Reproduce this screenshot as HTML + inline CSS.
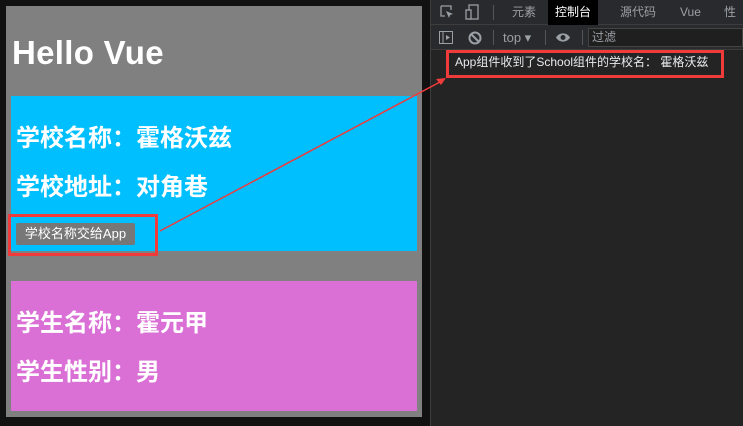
<!DOCTYPE html>
<html><head><meta charset="utf-8"><style>
*{margin:0;padding:0;box-sizing:border-box}
body{width:743px;height:426px;overflow:hidden;background:#111;position:relative;font-family:"Liberation Sans","Noto Sans CJK SC",sans-serif}
.a{position:absolute}
.panel{left:6px;top:6px;width:416px;height:411px;background:#808080}
h1{position:absolute;left:12px;top:34px;font-size:33px;color:#fff;font-weight:bold;line-height:38px;letter-spacing:0.3px}
.blue{left:11px;top:96px;width:406px;height:155px;background:#00bfff}
.pink{left:11px;top:281px;width:406px;height:130px;background:#da70d6}
.t{position:absolute;left:16px;font-size:24px;font-weight:bold;color:#fff;line-height:28px;white-space:nowrap}
.btn{left:16px;top:223px;width:119px;height:22px;background:#777;border-radius:2px;color:#fff;font-size:13px;line-height:22px;text-align:center}
.dev{left:430px;top:0;width:313px;height:426px;background:#242424;border-left:1px solid #3d3d3d}
.bar1{left:431px;top:0;width:312px;height:25px;background:#292a2d;border-bottom:1px solid #3d3d3d}
.bar2{left:431px;top:25px;width:312px;height:25px;background:#292a2d;border-bottom:1px solid #3d3d3d}
.tab{position:absolute;top:0;height:25px;line-height:25px;font-size:12px;color:#9aa0a6}
.redbox{border:3px solid #f03b3b}
</style></head><body>
<div class="a panel"></div>
<h1>Hello Vue</h1>
<div class="a blue"></div>
<div class="t" style="top:125px">学校名称：霍格沃兹</div>
<div class="t" style="top:174px">学校地址：对角巷</div>
<div class="a btn">学校名称交给App</div>
<div class="a redbox" style="left:8px;top:214px;width:150px;height:42px"></div>
<div class="a pink"></div>
<div class="t" style="top:310px">学生名称：霍元甲</div>
<div class="t" style="top:359px">学生性别：男</div>

<div class="a dev"></div>
<div class="a bar1">
 <svg class="a" style="left:9px;top:5px" width="14" height="14" viewBox="0 0 14 14"><path d="M1 1h10v4M1 1v10h4" stroke="#9aa0a6" fill="none" stroke-width="1.3"/><path d="M6 6l7 3-3 1-1 3z" fill="#9aa0a6"/></svg>
 <svg class="a" style="left:34px;top:4px" width="14" height="16" viewBox="0 0 14 16"><rect x="4" y="1" width="9" height="14" stroke="#9aa0a6" fill="none" stroke-width="1.3"/><rect x="1" y="6" width="5" height="9" stroke="#9aa0a6" fill="#292a2d" stroke-width="1.3"/></svg>
 <div class="a" style="left:62px;top:5px;width:1px;height:15px;background:#555"></div>
 <div class="tab" style="left:81px">元素</div>
 <div class="tab" style="left:117px;width:50px;background:#000;color:#fff;text-align:center">控制台</div>
 <div class="tab" style="left:189px">源代码</div>
 <div class="tab" style="left:249px">Vue</div>
 <div class="tab" style="left:293px">性能</div>
</div>
<div class="a bar2">
 <svg class="a" style="left:8px;top:6px" width="14" height="13" viewBox="0 0 14 13"><rect x="0.5" y="0.5" width="13" height="12" stroke="#9aa0a6" fill="none"/><path d="M4 1v11" stroke="#9aa0a6"/><path d="M7 4l4 2.5-4 2.5z" fill="#9aa0a6"/></svg>
 <svg class="a" style="left:37px;top:6px" width="14" height="14" viewBox="0 0 14 14"><circle cx="7" cy="7" r="5.5" stroke="#9aa0a6" fill="none" stroke-width="2"/><path d="M3 3l8 8" stroke="#9aa0a6" stroke-width="2"/></svg>
 <div class="a" style="left:62px;top:5px;width:1px;height:15px;background:#555"></div>
 <div class="tab" style="left:72px;font-size:13px">top ▾</div>
 <div class="a" style="left:114px;top:5px;width:1px;height:15px;background:#555"></div>
 <svg class="a" style="left:124px;top:7px" width="16" height="11" viewBox="0 0 16 11"><path d="M1 5.5C4 0 12 0 15 5.5C12 11 4 11 1 5.5z" fill="#9aa0a6"/><circle cx="8" cy="5.5" r="2.5" fill="#292a2d"/></svg>
 <div class="a" style="left:151px;top:5px;width:1px;height:15px;background:#555"></div>
 <div class="a" style="left:157px;top:3px;width:155px;height:19px;background:#1f1f1f;border:1px solid #444;color:#9aa0a6;font-size:12px;line-height:17px;padding-left:3px">过滤</div>
</div>
<div class="a" style="left:455px;top:55px;font-size:12px;color:#e8eaed;white-space:nowrap;line-height:15px">App组件收到了School组件的学校名：&nbsp;霍格沃兹</div>
<div class="a redbox" style="left:446px;top:50px;width:278px;height:28px"></div>
<svg class="a" style="left:0;top:0" width="743" height="426"><line x1="160" y1="231" x2="440" y2="82" stroke="#f03b3b" stroke-width="1.5"/><path d="M446 78l-10 1 5 6z" fill="#f03b3b"/></svg>
</body></html>
